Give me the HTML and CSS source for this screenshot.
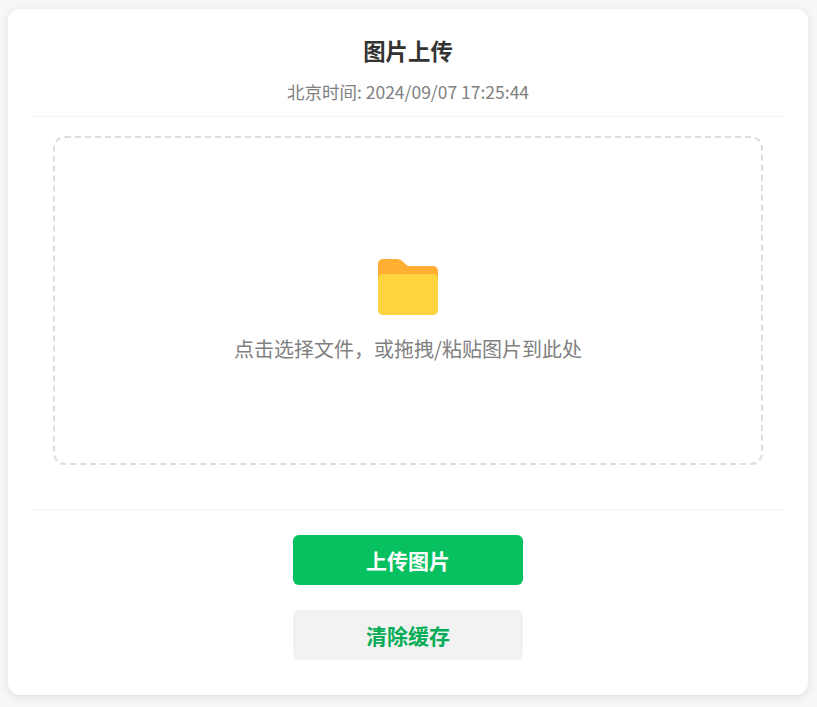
FILE: index.html
```html
<!DOCTYPE html>
<html lang="zh-CN">
<head>
<meta charset="utf-8">
<title>图片上传</title>
<link rel="stylesheet" href="styles.css">
</head>
<body>
<main class="card">
  <header class="header">
    <h1 class="title">图片上传</h1>
    <p class="time">北京时间: 2024/09/07 17:25:44</p>
  </header>
  <section class="dropzone">
    <svg class="folder" viewBox="0 0 60 56" width="60" height="56" aria-hidden="true">
      <path fill="#ffb033" d="M5 0H19C21.5 0 23.2 .9 24.8 2.5L28 5.6C29 6.6 30 7 31.500 7H55C57.800 7 60 9.200 60 12V20H0V5C0 2.200 2.200 0 5 0Z"/>
      <path fill="#ffd43e" d="M5 15H55C57.800 15 60 17.200 60 20V51C60 53.800 57.800 56 55 56H5C2.200 56 0 53.800 0 51V20C0 17.200 2.200 15 5 15Z"/>
    </svg>
    <p class="hint">点击选择文件，或拖拽/粘贴图片到此处</p>
  </section>
  <div class="actions">
    <button class="btn btn-primary" type="button">上传图片</button>
    <button class="btn btn-secondary" type="button">清除缓存</button>
  </div>
</main>
</body>
</html>
```
FILE: styles.css
```css
* { box-sizing: border-box; }
html, body { margin: 0; height: 100%; }
body {
  background: #f7f7f7;
  padding: 9px 9px 12px 8px;
  font-family: "Noto Sans CJK SC", "Noto Sans", sans-serif;
  overflow: hidden;
}
.card {
  height: 686px;
  background: #fff;
  border-radius: 12px;
  box-shadow: 0 2px 10px rgba(0, 0, 0, 0.1);
  padding: 24px 25px 35px;
  display: flex;
  flex-direction: column;
}
.header {
  height: 84px;
  border-bottom: 1px solid #f4f4f4;
  text-align: center;
}
.title {
  margin: 0;
  font-size: 22.4px;
  line-height: 35px;
  font-weight: 700;
  color: #333;
}
.time {
  margin: 5px 0 0;
  font-size: 17.5px;
  line-height: 38px;
  color: #808080;
}
.dropzone {
  margin: 19px 20px 0;
  height: 329px;
  border: 2px dashed #ddd;
  border-radius: 12px;
  display: flex;
  flex-direction: column;
  align-items: center;
  padding-top: 121px;
}
.folder { display: block; }
.hint {
  margin: 15px 0 0;
  font-size: 20px;
  line-height: 38px;
  color: #808080;
}
.actions {
  margin-top: 44px;
  border-top: 1px solid #f4f4f4;
  padding-top: 25px;
  display: flex;
  flex-direction: column;
  align-items: center;
  gap: 25px;
}
.btn {
  width: 230px;
  height: 50px;
  border: 0;
  border-radius: 6px;
  font-family: inherit;
  font-size: 21px;
  font-weight: 700;
  line-height: 48px;
  padding: 0 0 1px;
}
.btn-primary { background: #07c160; color: #fff; }
.btn-secondary { background: #f2f2f2; color: #06ad56; }
```
